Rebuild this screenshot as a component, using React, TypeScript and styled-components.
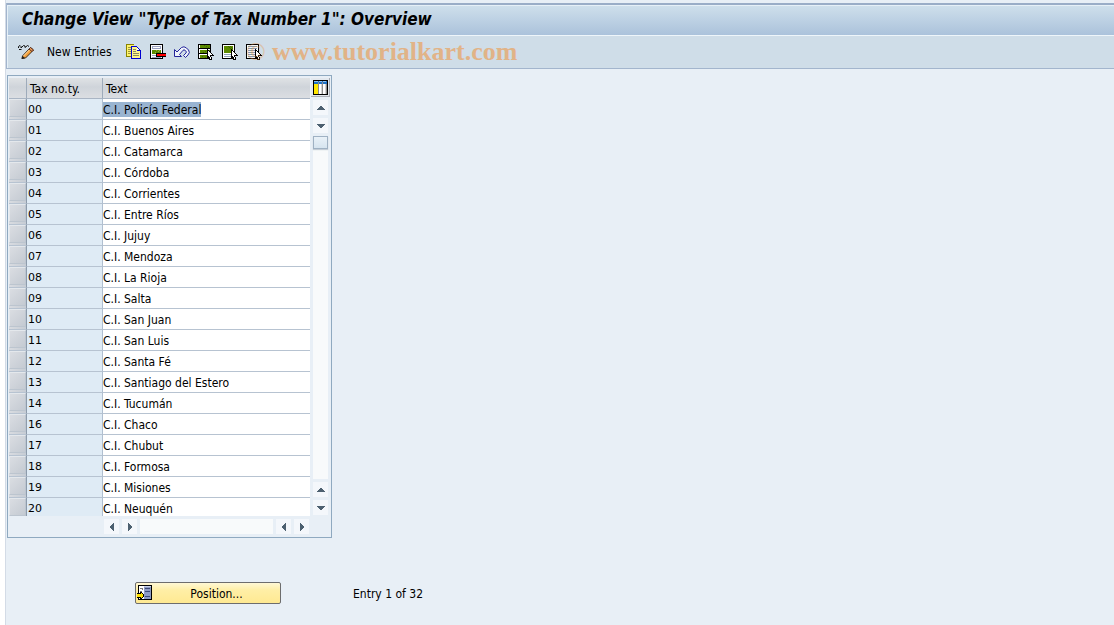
import React from "react";
import styled, { createGlobalStyle } from "styled-components";

const ui = `"DejaVu Sans Condensed", "DejaVu Sans", sans-serif`;

const GlobalStyle = createGlobalStyle`
  *, *::before, *::after { box-sizing: border-box; }
  html, body, #root { height: 100%; }
  body {
    margin: 0;
    background: #fff;
    color: #000;
    font: 12px/16px ${ui};
  }
  button, input { font: inherit; color: inherit; }
`;

const Page = styled.div`
  min-height: 100%;
  margin-left: 5px;
  padding-top: 3px;
  background: #e8eff6;
  border-left: 1px solid #d3dbe6;
`;

const Header = styled.header`
  border: solid #a3b5cd;
  border-width: 0 0 1px 1px;
`;

const TitleBar = styled.div`
  height: 33px;
  padding: 5px 15px;
  border-top: 2px solid #9aadc7;
  border-bottom: 1px solid #eef5fa;
  box-shadow: inset 1px 1px 0 #e6f0f7;
  background: linear-gradient(#cfe0ec, #abc2db);
`;

const Title = styled.h1`
  margin: 0;
  font: italic bold 17px/18px ${ui};
  white-space: nowrap;
`;

const Toolbar = styled.div`
  position: relative;
  display: flex;
  align-items: center;
  gap: 8px;
  height: 32px;
  padding-left: 10px;
  background: #cfdde8;
  box-shadow: inset 1px 0 0 #e6f0f7;
`;

const ToolButton = styled.button`
  display: flex;
  padding: 0;
  border: 0;
  background: none;
  white-space: nowrap;
`;

const TextToolButton = styled(ToolButton)`
  margin: 0 6px 0 4px;
`;

const Watermark = styled.span`
  position: absolute;
  left: 239px;
  top: 1px;
  font: bold 26px/30px "Liberation Serif", serif;
  color: #f09238;
  opacity: 0.55;
  white-space: nowrap;
  pointer-events: none;
`;

const CopyrightSign = styled.span`
  opacity: 0.6;
`;

const Main = styled.main`
  padding: 6px 1px 20px;
`;

const Panel = styled.section`
  display: inline-grid;
  grid-template-columns: auto auto;
  column-gap: 1px;
  row-gap: 3px;
  padding: 2px 1px 3px;
  border: 1px solid #8fa9c0;
  background: #e8eff6;
`;

const Table = styled.table`
  border-collapse: separate;
  border-spacing: 0;
  table-layout: fixed;
  width: 301px;
`;

const HeadCell = styled.th<{ $w: number }>`
  width: ${(p) => p.$w}px;
  height: 21px;
  padding: 2px 3px 0;
  text-align: left;
  font-weight: normal;
  border-right: 1px solid #9eabba;
  border-bottom: 1px solid #a9b5c4;
  background: linear-gradient(#dfe2e5, #cfd4da 45%, #dbdee2);
  &:last-child { border-right: 0; }
`;

const Row = styled.tr`
  height: 21px;
  td { border-bottom: 1px solid #b7c3d1; vertical-align: top; }
  &:last-child { height: 18px; }
  &:last-child td { border-bottom: 0; }
`;

const SelectCell = styled.td`
  padding: 0;
  border-right: 1px solid #8d9bab;
  background: linear-gradient(90deg, #d9dce1, #c6ccd4);
`;

const RowButton = styled.button`
  display: block;
  width: 100%;
  height: 18px;
  padding: 0;
  border: 1px solid #e4e8ec;
  border-color: #e4e8ec #bcc5cf #bcc5cf #e4e8ec;
  background: linear-gradient(135deg, #dadde2, #c4cad2);
`;

const CodeCell = styled.td`
  padding: 4px 1px 0;
  border-right: 1px solid #b0bfd0;
  background: #dfebf5;
  font: 11px/14px "DejaVu Sans", sans-serif;
`;

const TextCell = styled.td`
  padding: 3px 0 0;
  background: #fff;
`;

const TextField = styled.input<{ $selected: boolean }>`
  display: block;
  height: 15px;
  padding: 1px 0 0;
  border: 0;
  outline: 0;
  line-height: 14px;
  width: ${(p) => (p.$selected ? "auto" : "100%")};
  field-sizing: ${(p) => (p.$selected ? "content" : "fixed")};
  background: ${(p) => (p.$selected ? "#99b4d1" : "transparent")};
`;

const VerticalBar = styled.div`
  display: flex;
  flex-direction: column;
  align-items: center;
  gap: 3px;
  width: 19px;
  padding-bottom: 1px;
`;

const HorizontalBar = styled.div`
  display: flex;
  gap: 3px;
  padding: 0 1px 0 95px;
`;

const ConfigButton = styled.button`
  display: flex;
  align-items: center;
  justify-content: center;
  width: 19px;
  height: 19px;
  padding: 0;
  border: solid #a9adb5;
  border-width: 0 1px 1px 0;
  background: #e3e8ee;
`;

const ArrowButton = styled.button`
  display: flex;
  align-items: center;
  justify-content: center;
  flex: none;
  width: 15px;
  height: 15px;
  padding: 0;
  border: 0;
  background: #f4f7fb;
`;

const Track = styled.div<{ $vertical?: boolean }>`
  flex: 1;
  align-self: stretch;
  margin: 0 ${(p) => (p.$vertical ? 2 : 0)}px;
  background: #f8fafb;
`;

const Thumb = styled.div`
  height: 13px;
  border: 1px solid #9fb1c3;
  background: linear-gradient(#e9f1f8, #d6e4ef);
  box-shadow: 0 1px 1px #c3ccd6;
`;

const Footer = styled.footer`
  display: flex;
  align-items: center;
  gap: 72px;
  padding: 44px 0 0 128px;
`;

const PositionButton = styled.button`
  display: flex;
  align-items: center;
  width: 146px;
  height: 22px;
  padding: 0 0 0 1px;
  border: 1px solid #6d6d6d;
  border-radius: 2px;
  background: linear-gradient(#fff8d6, #ffefa6 35%, #ffe992);
`;

const ButtonLabel = styled.span`
  flex: 1;
  padding-top: 2px;
  text-align: center;
`;

const EntryCount = styled.div`
  padding-top: 2px;
`;

const PanelRow = styled.div`
  display: flex;
`;

type Shape = [color: string, d: string];

const PixelIcon = ({ shapes, w = 16, h = 16 }: { shapes: Shape[]; w?: number; h?: number }) => (
  <svg width={w} height={h} viewBox={`0 0 ${w} ${h}`} shapeRendering="crispEdges" aria-hidden="true">
    {shapes.map(([color, d], i) => (
      <path key={i} fill={color} d={d} />
    ))}
  </svg>
);

const pointer: Shape[] = [
  ["#000", "M9 5h1v1h1v1h1v1h1v1h1v1h1v1h1v1h-3v1h1v3h-3v-2h-1v1h-1z"],
  ["#fff", "M10 7h1v1h1v1h1v1h1v1h-2v2h1v2h-1v-2h-1v-1h-1z"],
];

const copyIcon: Shape[] = [
  ["#8a8400", "M0 0h8v13H0z"],
  ["#fff36a", "M1 1h7v11H1z"],
  ["#9b9440", "M2 3h5v1H2zM2 5h5v1H2zM2 7h5v1H2zM2 9h5v1H2z"],
  ["#0000d0", "M5 2h6v1h1v1h1v1h1v1h1v9H5z"],
  ["#fff58c", "M6 3h5v4h3v7H6z"],
  ["#fff", "M11 4h1v1h1v1h-2z"],
  ["#8c8a5c", "M7 5h3v1H7zM7 7h3v1H7zM7 9h6v1H7zM7 11h6v1H7z"],
];

const deleteIcon: Shape[] = [
  ["#000", "M0 0h13v15H0z"],
  ["#fff", "M1 1h11v13H1z"],
  ["#9aa0c0", "M2 2h9v1H2zM2 3h1v1H2zM10 3h1v1h-1zM2 4h9v1H2zM2 11h5v1H2zM2 13h9v1H2z"],
  ["#5c8a00", "M2 6h9v4H2z"],
  ["#8fb23a", "M6 6h1v1H6zM8 7h1v1H8zM5 8h1v1H5zM9 6h1v1H9z"],
  ["#000", "M6 9h10v4H6z"],
  ["#f00", "M7 10h9v2H7z"],
];

const selectAllIcon: Shape[] = [
  ["#000", "M0 0h13v15H0z"],
  ["#fff", "M1 1h11v13H1z"],
  ["#5c8a00", "M2 1h10v3H2zM2 6h10v3H2zM2 11h10v3H2z"],
  ["#000", "M1 4h11v1H1zM1 9h11v1H1z"],
  ["#3f6800", "M6 1h1v1H6zM8 2h1v1H8zM10 3h1v1h-1zM7 7h1v1H7zM5 8h1v1H5zM4 12h1v1H4zM7 13h1v1H7z"],
  ...pointer,
];

const selectBlockIcon: Shape[] = [
  ["#000", "M0 0h13v15H0z"],
  ["#fff", "M1 1h11v13H1z"],
  ["#5c8a00", "M2 2h9v7H2z"],
  ["#3f6800", "M6 2h1v1H6zM8 2h1v1H8zM7 3h1v1H7zM9 3h1v1H9zM10 4h1v1h-1zM8 4h1v1H8zM9 5h1v1H9z"],
  ["#8ea3b8", "M2 10h7v1H2zM2 12h7v1H2z"],
  ...pointer,
];

const deselectIcon: Shape[] = [
  ["#000", "M0 0h13v15H0z"],
  ["#f5f8fa", "M1 1h11v13H1z"],
  ["#8097ad", "M2 2h9v1H2zM2 4h9v1H2zM2 6h9v1H2zM2 8h8v1H2zM2 10h7v1H2zM2 12h7v1H2z"],
  ...pointer,
];

const configIcon: Shape[] = [
  ["#000", "M0 0h15v15H0z"],
  ["#fff", "M1 1h13v13H1z"],
  ["#1c6fc4", "M1 1h13v3H1z"],
  ["#8fc1f0", "M1 1h4v1H1zM6 1h3v1H6zM10 1h3v1h-3z"],
  ["#ffe600", "M1 4h4v10H1z"],
  ["#8c8c8c", "M5 2h1v12H5zM9 2h1v12H9zM13 4h1v10h-1z"],
  ["#d4d4d4", "M8 4h1v10H8zM12 4h1v10h-1z"],
];

const positionIcon: Shape[] = [
  ["#000", "M1 0h14v15H1z"],
  ["#fff", "M2 1h5v13H2z"],
  ["#8d9bc4", "M7 1h7v13H7z"],
  ["#c9d2ea", "M7 1h7v1H7z"],
  ["#3d4a78", "M8 3h5v1H8zM8 6h5v1H8zM8 11h5v1H8z"],
  ["#777", "M3 3h3v1H3zM5 4h1v1H5zM3 6h2v1H3z"],
  ["#000", "M0 8h3V7h2v1h1v1h1v3H6v1H5v1H3v-1H0z"],
  ["#ffe000", "M0 9h4V8h1v1h1v3H5v1H4v-1H0z"],
];

const PencilIcon = () => (
  <svg width="18" height="16" viewBox="0 0 18 16" aria-hidden="true">
    <path d="M1.500 4V2.500L3 1.500L4 2.500V4L6.500 1.500L8 2V3.500L10.500 1.500L12 2.500M2 5.500H4.500" fill="none" stroke="#111" />
    <path d="M5.500 12L13.500 3.500L16.500 6L8.500 14L5 14.500z" fill="#f6a03a" stroke="#3a2a18" />
    <path d="M6.500 12L13.500 4.800" stroke="#ffe3b0" />
    <path d="M12 5L13.500 3.500L16.500 6L15 7.500z" fill="#f0a05a" stroke="#5a2d20" />
    <path d="M4.500 15L5.500 12L8 14z" fill="#222" />
  </svg>
);

const UndoIcon = () => (
  <svg width="16" height="16" viewBox="0 0 16 16" aria-hidden="true">
    <path
      d="M0.500 12.500V5.500L3 8L7.500 3.500Q10 1.800 12.500 4L14.500 6Q16.500 8.500 14 11L11.500 13.500L9.500 11.500L12 9Q12.800 8 11.800 7L11 6.200Q10 5.500 9 6.300L5.500 10.500L7.500 12.500z"
      fill="#eef3fb"
      stroke="#24249a"
    />
  </svg>
);

const arrows = {
  up: "M3 0h2v1h1v1h1v1h1v1H0V3h1V2h1V1h1z",
  down: "M0 0h8v1H7v1H6v1H5v1H3V3H2V2H1V1H0z",
  left: "M3 0h1v8H3V7H2V6H1V5H0V3h1V2h1V1h1z",
  right: "M0 0h1v1h1v1h1v1h1v2H3v1H2v1H1v1H0z",
};

const Arrow = ({ dir }: { dir: keyof typeof arrows }) => {
  const flat = dir === "up" || dir === "down";
  return (
    <ArrowButton aria-label={`Scroll ${dir}`}>
      <PixelIcon shapes={[["#4d6070", arrows[dir]]]} w={flat ? 8 : 4} h={flat ? 4 : 8} />
    </ArrowButton>
  );
};

const entries: [string, string][] = [
  ["00", "C.I. Policía Federal"],
  ["01", "C.I. Buenos Aires"],
  ["02", "C.I. Catamarca"],
  ["03", "C.I. Córdoba"],
  ["04", "C.I. Corrientes"],
  ["05", "C.I. Entre Ríos"],
  ["06", "C.I. Jujuy"],
  ["07", "C.I. Mendoza"],
  ["08", "C.I. La Rioja"],
  ["09", "C.I. Salta"],
  ["10", "C.I. San Juan"],
  ["11", "C.I. San Luis"],
  ["12", "C.I. Santa Fé"],
  ["13", "C.I. Santiago del Estero"],
  ["14", "C.I. Tucumán"],
  ["16", "C.I. Chaco"],
  ["17", "C.I. Chubut"],
  ["18", "C.I. Formosa"],
  ["19", "C.I. Misiones"],
  ["20", "C.I. Neuquén"],
];

const tools: [string, Shape[] | null][] = [
  ["Copy as", copyIcon],
  ["Delete", deleteIcon],
  ["Undo change", null],
  ["Select all", selectAllIcon],
  ["Select block", selectBlockIcon],
  ["Deselect all", deselectIcon],
];

export default function App() {
  return (
    <>
      <GlobalStyle />
      <Page>
        <Header>
          <TitleBar>
            <Title>Change View "Type of Tax Number 1": Overview</Title>
          </TitleBar>
          <Toolbar>
            <ToolButton aria-label="Display/Change">
              <PencilIcon />
            </ToolButton>
            <TextToolButton>New Entries</TextToolButton>
            {tools.map(([label, shapes]) => (
              <ToolButton key={label} aria-label={label}>
                {shapes ? <PixelIcon shapes={shapes} /> : <UndoIcon />}
              </ToolButton>
            ))}
            <Watermark>
              <CopyrightSign>©</CopyrightSign> www.tutorialkart.com
            </Watermark>
          </Toolbar>
        </Header>
        <Main>
          <PanelRow>
            <Panel>
              <Table>
                <thead>
                  <tr>
                    <HeadCell $w={18} aria-label="Select" />
                    <HeadCell $w={76}>Tax no.ty.</HeadCell>
                    <HeadCell $w={207}>Text</HeadCell>
                  </tr>
                </thead>
                <tbody>
                  {entries.map(([code, text], i) => (
                    <Row key={code}>
                      <SelectCell>
                        <RowButton aria-label={`Select row ${code}`} />
                      </SelectCell>
                      <CodeCell>{code}</CodeCell>
                      <TextCell>
                        <TextField aria-label={`Text ${code}`} defaultValue={text} $selected={i === 0} />
                      </TextCell>
                    </Row>
                  ))}
                </tbody>
              </Table>
              <VerticalBar>
                <ConfigButton aria-label="Table settings">
                  <PixelIcon shapes={configIcon} w={15} h={15} />
                </ConfigButton>
                <Arrow dir="up" />
                <Arrow dir="down" />
                <Track $vertical>
                  <Thumb />
                </Track>
                <Arrow dir="up" />
                <Arrow dir="down" />
              </VerticalBar>
              <HorizontalBar>
                <Arrow dir="left" />
                <Arrow dir="right" />
                <Track />
                <Arrow dir="left" />
                <Arrow dir="right" />
              </HorizontalBar>
            </Panel>
          </PanelRow>
          <Footer>
            <PositionButton>
              <PixelIcon shapes={positionIcon} />
              <ButtonLabel>Position...</ButtonLabel>
            </PositionButton>
            <EntryCount>Entry 1 of 32</EntryCount>
          </Footer>
        </Main>
      </Page>
    </>
  );
}
